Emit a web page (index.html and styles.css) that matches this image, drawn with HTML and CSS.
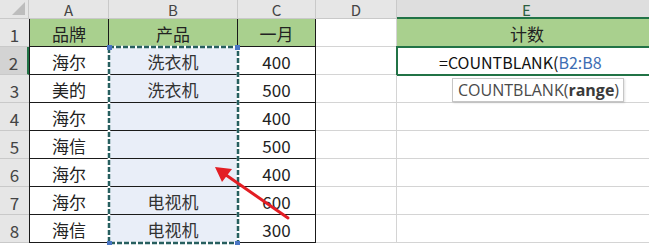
FILE: index.html
```html
<!DOCTYPE html>
<html>
  <head>
    <title>COUNTBLANK</title>
    <link rel="stylesheet" href="styles.css">
  </head>
  <body>
    <div class="wrap">
      <div class="sheet">
        <!-- column letters -->
        <div class="corner"><span class="tri"></span></div>
        <div class="hd">A</div>
        <div class="hd">B</div>
        <div class="hd">C</div>
        <div class="hd">D</div>
        <div class="hd hd-on">E</div>

        <!-- row 1 -->
        <div class="rh">1</div>
        <div class="c t g first">品牌</div>
        <div class="c t g">产品</div>
        <div class="c t g">一月</div>
        <div class="c"></div>
        <div class="c g gl">计数</div>

        <div class="rh rh-on">2</div>
        <div class="c t first">海尔</div>
        <div class="c t sel">洗衣机</div>
        <div class="c t num">400</div>
        <div class="c"></div>
        <div class="c active"><span>=COUNTBLANK(</span><span class="ref">B2:B8</span></div>

        <div class="rh">3</div>
        <div class="c t first">美的</div>
        <div class="c t sel">洗衣机</div>
        <div class="c t num">500</div>
        <div class="c"></div>
        <div class="c"></div>

        <div class="rh">4</div>
        <div class="c t first">海尔</div>
        <div class="c t sel"></div>
        <div class="c t num">400</div>
        <div class="c"></div>
        <div class="c"></div>

        <div class="rh">5</div>
        <div class="c t first">海信</div>
        <div class="c t sel"></div>
        <div class="c t num">500</div>
        <div class="c"></div>
        <div class="c"></div>

        <div class="rh">6</div>
        <div class="c t first">海尔</div>
        <div class="c t sel"></div>
        <div class="c t num">400</div>
        <div class="c"></div>
        <div class="c"></div>

        <div class="rh">7</div>
        <div class="c t first">海尔</div>
        <div class="c t sel">电视机</div>
        <div class="c t num">600</div>
        <div class="c"></div>
        <div class="c"></div>

        <div class="rh">8</div>
        <div class="c t first">海信</div>
        <div class="c t sel">电视机</div>
        <div class="c t num">300</div>
        <div class="c"></div>
        <div class="c"></div>
      </div>

      <!-- copy range marquee around B2:B8 -->
      <svg class="marquee" width="134" height="202" viewBox="0 0 134 202">
        <rect x="2" y="2" width="129" height="196" fill="none" stroke="#fff" stroke-width="2.5"/>
        <rect x="2" y="2" width="129" height="196" fill="none" stroke="#275f5f" stroke-width="2.5" stroke-dasharray="5 2"/>
        <rect x="0" y="0" width="5" height="5" fill="#4a76c4"/>
        <rect x="128" y="0" width="5" height="5" fill="#4a76c4"/>
        <rect x="0" y="196" width="5" height="5" fill="#4a76c4"/>
        <rect x="128" y="196" width="5" height="5" fill="#4a76c4"/>
      </svg>

      <div class="tip">COUNTBLANK(<b>range</b>)</div>

      <svg class="arrow" width="90" height="70" viewBox="0 0 90 70">
        <line x1="78" y1="56" x2="16" y2="13" stroke="#e31e24" stroke-width="3" stroke-linecap="round"/>
        <polygon points="5,5 22,7 12,20" fill="#e31e24"/>
      </svg>
    </div>
  </body>
</html>
```

FILE: styles.css
```css
body{
  margin:0;
  background:#fff;
  overflow:hidden;
  font-family:"Noto Sans CJK SC","Liberation Sans",sans-serif;
}
.wrap{
  position:relative;
  width:649px;
  height:245px;
  overflow:hidden;
}
.sheet{
  display:grid;
  grid-template-columns:29px 80px 129px 78px 81px 260px;
  grid-template-rows:19px repeat(8,28px);
}
.sheet > div{
  box-sizing:border-box;
  display:flex;
  align-items:center;
  justify-content:center;
}
.corner{
  background:#e6e6e6;
  border-right:1px solid #c9c9c9;
  border-bottom:1px solid #c9c9c9;
  position:relative;
}
.tri{
  position:absolute;
  right:3px;
  bottom:3px;
  width:0;
  height:0;
  border-left:13px solid transparent;
  border-bottom:13px solid #bdbdbd;
}
.hd{
  background:#e6e6e6;
  border-right:1px solid #c9c9c9;
  border-bottom:1px solid #c9c9c9;
  color:#444;
  font-size:15px;
  line-height:1;
  padding-top:1px;
}
.hd-on{
  background:#dedede;
  color:#2c5e3f;
  border-bottom:2px solid #217346;
}
.rh{
  background:#e6e6e6;
  border-bottom:1px solid #c9c9c9;
  color:#444;
  font-size:17px;
  padding-top:4px;
}
.rh-on{
  background:#d3d3d3;
  border-right:2px solid #217346;
}
.c{
  border-right:1px solid #d4d4d4;
  border-bottom:1px solid #d4d4d4;
  color:#222;
  font-size:17px;
  padding-top:2px;
}
.c.t{
  border-right:1px solid #1a1a1a;
  border-bottom:1px solid #1a1a1a;
}
.c.first{
  border-left:1px solid #1a1a1a;
}
.g{
  background:#a9d08e;
}
.gl{
  border-right:none;
}
.sel{
  background:#e9eef8;
  color:#333;
}
.num{
  font-size:17px;
}
.active{
  outline:2px solid #217346;
  outline-offset:-1px;
  justify-content:flex-start !important;
  padding-left:42px;
  font-size:16px;
  color:#111;
}
.ref{
  color:#3d6db3;
}
.marquee{
  position:absolute;
  left:107px;
  top:45px;
}
.tip{
  position:absolute;
  left:452px;
  top:78px;
  width:172px;
  height:24px;
  box-sizing:border-box;
  border:1px solid #c6c6c6;
  background:#fff;
  box-shadow:1px 1px 2px rgba(0,0,0,0.12);
  color:#4a4a4a;
  font-size:16px;
  line-height:22px;
  padding-left:5px;
  white-space:nowrap;
  font-family:"Open Sans","Noto Sans",sans-serif;
}
.tip b{
  color:#3a3a3a;
}
.arrow{
  position:absolute;
  left:210px;
  top:162px;
}
```
